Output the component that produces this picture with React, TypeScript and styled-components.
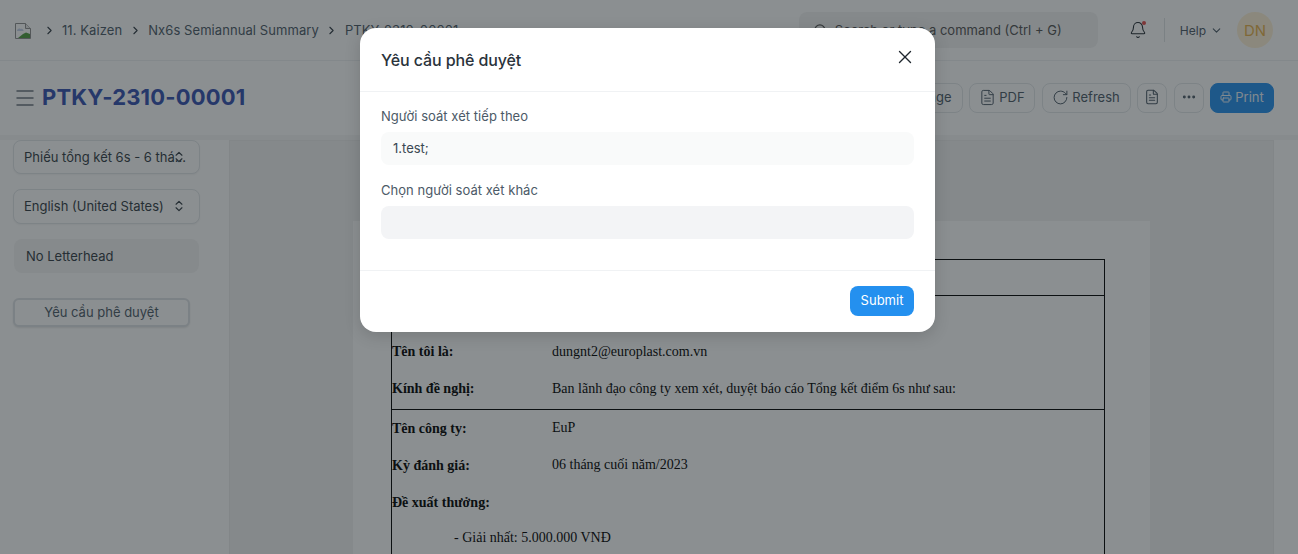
import React from "react";
import styled, { createGlobalStyle } from "styled-components";
import { Bell, ChevronDown, ChevronRight, ChevronsUpDown, Ellipsis, FileText, Menu, Printer, RotateCw, Search, X } from "lucide-react";

const Global = createGlobalStyle`
  html, body { margin: 0; padding: 0; height: 100%; overflow: hidden; background: #fff; }
  body { font-family: Inter, "Noto Sans", sans-serif; color: #1f272e; }
  * { box-sizing: border-box; }
`;

const Page = styled.div`
  position: relative; width: 1298px; height: 554px; overflow: hidden; background: #fff;
  display: flex; flex-direction: column;
`;
const Navbar = styled.header`
  height: 61px; flex: none; display: flex; align-items: center; padding: 0 25px 0 15px;
  border-bottom: 1px solid #eef0f2; background: #fff;
`;
const Crumbs = styled.nav`
  display: flex; align-items: center; font-size: 13px; color: #4c5a67; flex: 1; letter-spacing: .006em;
`;
const Crumb = styled.span`white-space: nowrap;`;
const CrumbSep = styled.span`display: flex; width: 26px; justify-content: center; color: #313b44;`;
const FirstSep = styled(CrumbSep)`width: 31px; padding-left: 5px;`;
const BrokenImg = styled.svg`width: 16px; height: 16px; margin-top: 2px; flex: none;`;
const SearchBox = styled.div`
  width: 299px; height: 36px; border-radius: 8px; background: #f3f3f3; display: flex; align-items: center;
  gap: 7px; padding-left: 14px; font-size: 13px; color: #525252; margin-right: 31px;
`;
const NavIcons = styled.div`display: flex; align-items: center;`;
const NotifWrap = styled.span`position: relative; display: flex; color: #1f272e;`;
const Dot = styled.i`position: absolute; right: 1px; top: 0; width: 4px; height: 4px; border-radius: 50%; background: #e24c4c;`;
const VSep = styled.span`width: 1px; height: 24px; background: #dfe2e5; margin: 0 15px 0 17px;`;
const Help = styled.span`display: flex; align-items: center; gap: 4px; font-size: 12px; color: #4c5a67; margin-right: 14px;`;
const Avatar = styled.span`
  width: 36px; height: 36px; border-radius: 50%; background: #fff1d6; color: #e8b04a; font-size: 15px;
  display: flex; align-items: center; justify-content: center;
`;

const TitleBar = styled.div`
  height: 74px; flex: none; display: flex; align-items: center; padding: 0 24px 0 13px; background: #fff;
`;
const TitleIcon = styled.span`display: flex; color: #6c7680; margin-right: 5px;`;
const Title = styled.h1`
  margin: 0 0 2px; font-size: 22px; font-weight: 700; color: #3450b0; flex: 1; line-height: 1; letter-spacing: .008em;
`;
const Actions = styled.div`display: flex; gap: 6.5px; align-items: center;`;
const Btn = styled.button<{ $w?: number }>`
  height: 30px; padding: 0 ${p => (p.$w ? 0 : 10)}px 2px; ${p => (p.$w ? `width:${p.$w}px;` : "")}
  display: flex; align-items: center; justify-content: center; gap: 3px;
  background: #fff; border: 1px solid #e2e6e9; border-radius: 8px; font: inherit; font-size: 13px; color: #4c5a67;
`;
const PrintBtn = styled(Btn)`background: #2490ef; border-color: #2490ef; color: #e8f2fb; gap: 3px;`;

const Body = styled.div`flex: 1; display: flex; min-height: 0; background: linear-gradient(#f7f7f7 0 5px, #fff 5px);`;
const Side = styled.aside`
  width: 229px; flex: none; padding: 4.5px 29px 0 13px; display: flex; flex-direction: column;
`;
const Select = styled.div`
  height: 34.5px; border: 1px solid #e2e6e9; border-radius: 8px; background: #fff; display: flex; align-items: center;
  padding-left: 10px; font-size: 13px; color: #333c44; margin-bottom: 15px; position: relative; white-space: nowrap; box-shadow: 0 1px 2px rgba(0,0,0,.05);
`;
const SelectIcon = styled.span<{ $r: number }>`position: absolute; right: ${p => p.$r}px; top: 9px; display: flex; color: #333c44;`;
const Letterhead = styled.div`
  height: 34.5px; border-radius: 8px; background: #f5f5f5; display: flex; align-items: center; padding-left: 12px;
  font-size: 13px; color: #333c44; margin: 0 0 25px 1px; width: 185px;
`;
const ReqBtn = styled.button`
  width: 177px; height: 29px; border: 2px solid #dfe2e6; border-radius: 6px; background: #fff; font: inherit; font-size: 13px;
  color: #4c5a67; box-shadow: 0 1px 2px rgba(0,0,0,.1); padding: 0 0 2px;
`;
const Preview = styled.main`
  flex: 1; margin: 5px 24px 0 0; background: #f3f3f3; border: 1px solid #ececec; border-bottom: 0; padding: 80px 123px 0; overflow: hidden;
`;
const Sheet = styled.article`
  background: #fff; height: 400px; padding: 38px 45px 0 38px; font-family: "Liberation Serif", "Times New Roman", serif; font-size: 14px; color: #000;
`;
const DocTable = styled.div`border: 1px solid #000; border-bottom: 0; height: 400px;`;
const DocHead = styled.div`height: 36px; border-bottom: 1px solid #000;`;
const DocSection = styled.section`border-bottom: 1px solid #000; padding-bottom: 12px;`;
const DocRow = styled.div<{ $h: number; $lift?: boolean }>`
  height: ${p => p.$h}px; display: grid; grid-template-columns: 160px 1fr; align-items: end; white-space: nowrap;
  & > b { font-weight: 700; }
  & > span { margin-bottom: ${p => (p.$lift ? 1 : 0)}px; }
`;
const DocIndent = styled.div`padding: 19px 0 0 62px; white-space: nowrap;`;

const Overlay = styled.div`position: absolute; inset: 0; background: rgba(24, 31, 36, .5);`;
const Modal = styled.div`
  position: absolute; left: 360px; top: 28px; width: 575px; height: 304px; border-radius: 16px; background: #fff;
  box-shadow: 0 4px 16px rgba(0,0,0,.15); display: flex; flex-direction: column; overflow: hidden;
`;
const ModalHead = styled.div`
  height: 64px; flex: none; border-bottom: 1px solid #f0f2f4; display: flex; align-items: center; justify-content: space-between;
  padding: 0 19px 0 21px;
`;
const ModalTitle = styled.h2`margin: 0; font-size: 16px; font-weight: 500; color: #2a333b; letter-spacing: -.006em;`;
const CloseBtn = styled.span`display: flex; margin-top: -5px; color: #1f272e;`;
const ModalBody = styled.div`flex: 1; padding: 15px 21px 0; display: flex; flex-direction: column;`;
const Label = styled.label`font-size: 13px; color: #4c5a67; line-height: 18px; margin-bottom: 7px; letter-spacing: .003em;`;
const ReadOnly = styled.div`
  height: 33px; border-radius: 8px; background: #f9fafa; padding: 0 0 2px 12px; display: flex; align-items: center;
  font-size: 13px; color: #3a4853; margin-bottom: 16px;
`;
const Input = styled.div`height: 33px; border-radius: 8px; background: #f3f4f6;`;
const ModalFoot = styled.div`
  height: 62px; flex: none; border-top: 1px solid #f0f2f4; display: flex; align-items: center; justify-content: flex-end; padding: 0 21px 1px 0;
`;
const Submit = styled.button`
  width: 64px; height: 30px; border: 0; border-radius: 8px; background: #2490ef; color: #fff; font: inherit; font-size: 13px; padding: 0 0 2px;
`;

export default function App() {
  return (
    <Page>
      <Global />
      <Navbar>
        <Crumbs>
          <BrokenImg viewBox="0 0 16 16" aria-hidden>
            <path d="M.5.5h10l5 5v10H.5z" fill="#fff" stroke="#8f8f8f" />
            <path d="M10.5.5v5h5" fill="#e8e8e8" stroke="#8f8f8f" />
            <path d="M3 15l5-4 3-1.500 4 1.500v4z" fill="#4e9c3f" />
            <path d="M2 8c0-2 2-3 3.500-2C7 5 9 7 8.500 8z" fill="#c6d3ea" />
          </BrokenImg>
          <FirstSep><ChevronRight size={13} /></FirstSep>
          <Crumb>11. Kaizen</Crumb>
          <CrumbSep><ChevronRight size={13} /></CrumbSep>
          <Crumb>Nx6s Semiannual Summary</Crumb>
          <CrumbSep><ChevronRight size={13} /></CrumbSep>
          <Crumb>PTKY-2310-00001</Crumb>
        </Crumbs>
        <SearchBox><Search size={15} />Search or type a command (Ctrl + G)</SearchBox>
        <NavIcons>
          <NotifWrap><Bell size={18} strokeWidth={1.4} /><Dot /></NotifWrap>
          <VSep />
          <Help>Help <ChevronDown size={13} /></Help>
          <Avatar>DN</Avatar>
        </NavIcons>
      </Navbar>
      <TitleBar>
        <TitleIcon><Menu size={24} strokeWidth={1.5} /></TitleIcon>
        <Title>PTKY-2310-00001</Title>
        <Actions>
          <Btn>Change</Btn>
          <Btn $w={66}><FileText size={17} strokeWidth={1.4} />PDF</Btn>
          <Btn $w={89}><RotateCw size={17} strokeWidth={1.4} />Refresh</Btn>
          <Btn $w={30}><FileText size={16} strokeWidth={1.6} /></Btn>
          <Btn $w={30}><Ellipsis size={16} strokeWidth={2.4} /></Btn>
          <PrintBtn $w={64}><Printer size={12} />Print</PrintBtn>
        </Actions>
      </TitleBar>
      <Body>
        <Side>
          <Select>Phiếu tổng kết 6s - 6 thá...<SelectIcon $r={13}><ChevronsUpDown size={14} /></SelectIcon></Select>
          <Select>English (United States)<SelectIcon $r={13}><ChevronsUpDown size={14} /></SelectIcon></Select>
          <Letterhead>No Letterhead</Letterhead>
          <ReqBtn>Yêu cầu phê duyệt</ReqBtn>
        </Side>
        <Preview>
          <Sheet>
            <DocTable>
              <DocHead />
              <DocSection>
                <DocRow $h={64}><b>Tên tôi là:</b><span>dungnt2@europlast.com.vn</span></DocRow>
                <DocRow $h={37}><b>Kính đề nghị:</b><span>Ban lãnh đạo công ty xem xét, duyệt báo cáo Tổng kết điểm 6s như sau:</span></DocRow>
              </DocSection>
              <DocRow $h={27} $lift><b>Tên công ty:</b><span>EuP</span></DocRow>
              <DocRow $h={37} $lift><b>Kỳ đánh giá:</b><span>06 tháng cuối năm/2023</span></DocRow>
              <DocRow $h={37}><b>Đề xuất thưởng:</b></DocRow>
              <DocIndent>- Giải nhất: 5.000.000 VNĐ</DocIndent>
            </DocTable>
          </Sheet>
        </Preview>
      </Body>
      <Overlay />
      <Modal>
        <ModalHead>
          <ModalTitle>Yêu cầu phê duyệt</ModalTitle>
          <CloseBtn><X size={22} strokeWidth={1.5} /></CloseBtn>
        </ModalHead>
        <ModalBody>
          <Label>Người soát xét tiếp theo</Label>
          <ReadOnly>1.test;</ReadOnly>
          <Label>Chọn người soát xét khác</Label>
          <Input />
        </ModalBody>
        <ModalFoot><Submit>Submit</Submit></ModalFoot>
      </Modal>
    </Page>
  );
}
